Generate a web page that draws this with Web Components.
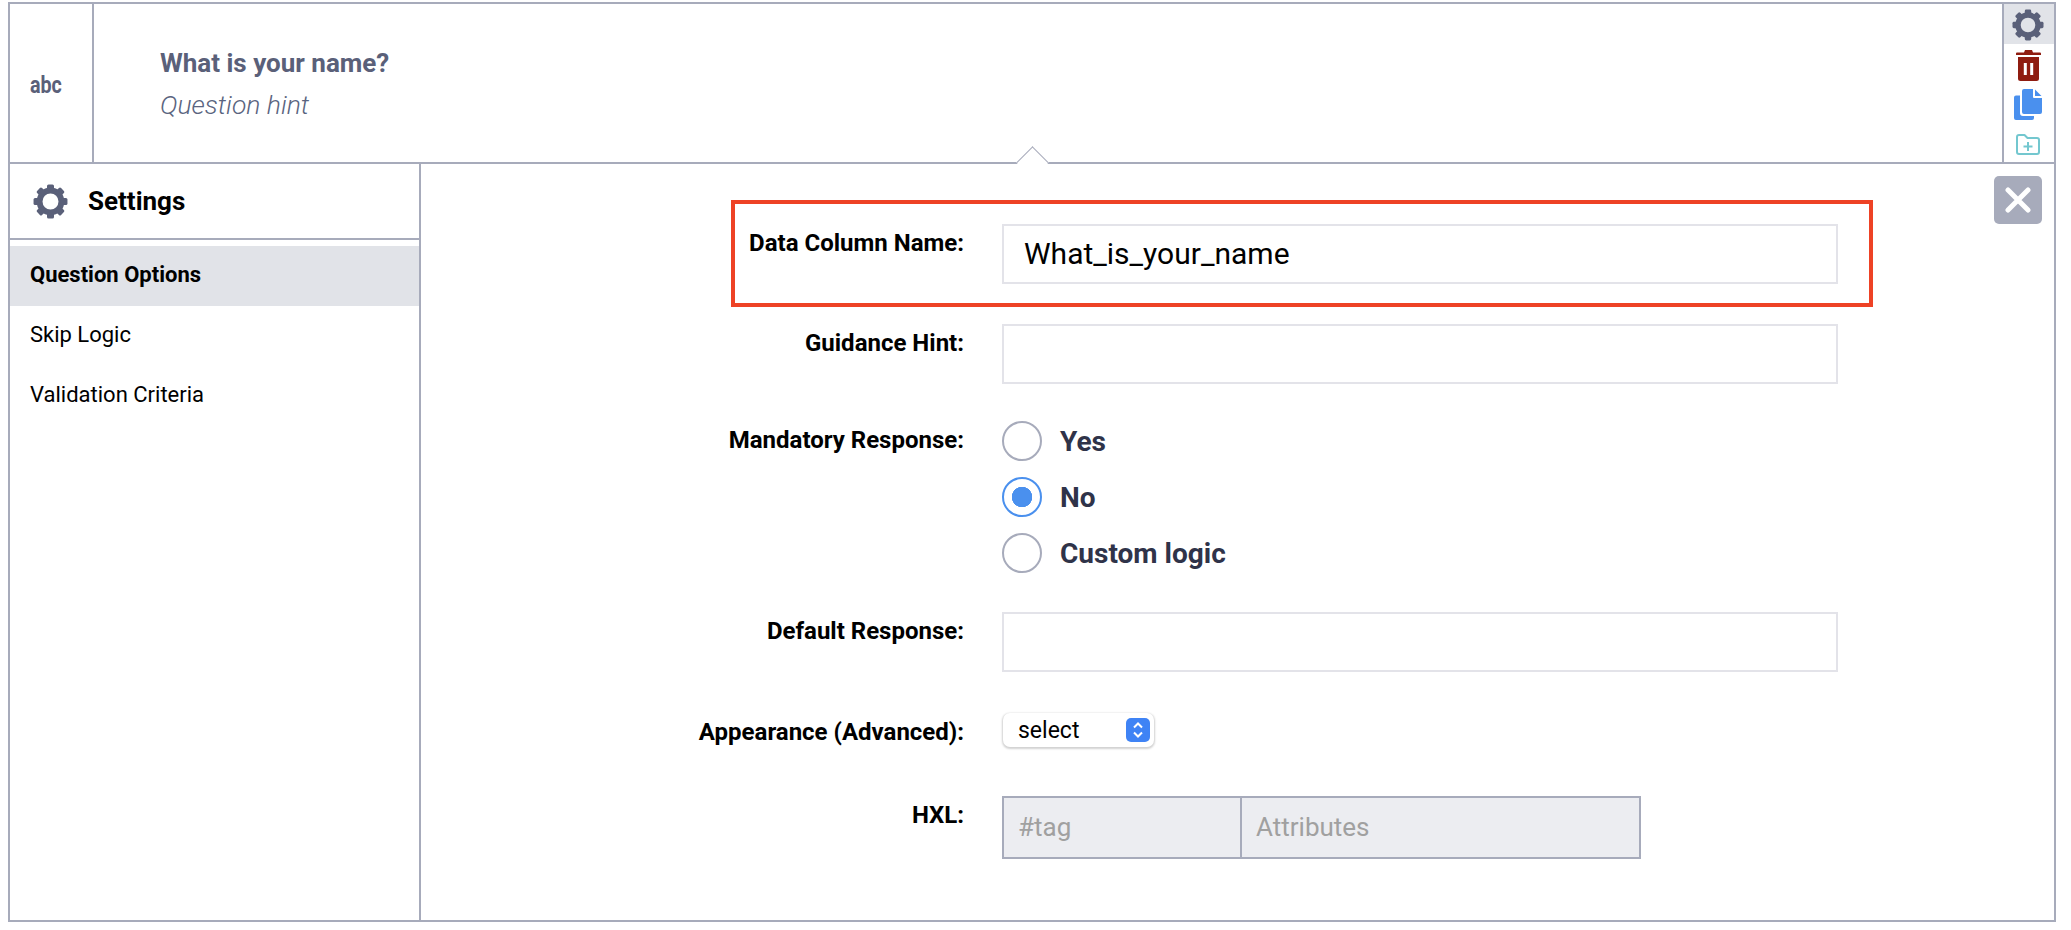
<!DOCTYPE html>
<html>
<head>
    <title>Question settings</title>
    <style>
        body { margin: 0; background: #fff; font-family: Roboto, "Liberation Sans", sans-serif; }
    </style>
</head>
<body>
<q-editor>
    <q-head slot="head" type="abc" title-text="What is your name?" hint="Question hint"></q-head>
    <q-side slot="side">
        <q-nav active>Question Options</q-nav>
        <q-nav>Skip Logic</q-nav>
        <q-nav>Validation Criteria</q-nav>
    </q-side>
    <q-form slot="form">
        <q-field label="Data Column Name:"><q-box>What_is_your_name</q-box></q-field>
        <q-field label="Guidance Hint:" style="margin-top:40px"><q-box></q-box></q-field>
        <q-field label="Mandatory Response:" style="margin-top:37px">
            <q-radio>Yes</q-radio>
            <q-radio checked>No</q-radio>
            <q-radio>Custom logic</q-radio>
        </q-field>
        <q-field label="Default Response:" style="margin-top:39px"><q-box></q-box></q-field>
        <q-field label="Appearance (Advanced):" style="margin-top:41px"><q-select>select</q-select></q-field>
        <q-field label="HXL:" style="margin-top:45px"><q-hxl></q-hxl></q-field>
    </q-form>
</q-editor>

<script>
    const GEAR = `<svg viewBox="0 0 32 32" width="100%" height="100%" style="display:block">
        <circle cx="16" cy="16" r="10" fill="none" stroke="#5a6079" stroke-width="5.4"/>
        <g fill="#5a6079">
            ${[0, 45, 90, 135, 180, 225, 270, 315].map(a => `<rect x="12.8" y="0.5" width="6.4" height="6" rx="1.4" transform="rotate(${a} 16 16)"/>`).join('')}
        </g></svg>`;

    function define(name, css, html) {
        customElements.define(name, class extends HTMLElement {
            constructor() {
                super();
                let root = this.attachShadow({mode: 'open'});
                root.innerHTML = `<style>${css}</style>` + (typeof html === 'function' ? html(this) : html);
            }
        });
    }

    define('q-editor', `
        :host { display: flex; flex-direction: column; box-sizing: border-box; width: 2048px; height: 920px;
                margin: 2px 0 0 8px; border: 2px solid #a7abbb; }
        .body { flex: 1; display: flex; min-height: 0; }
    `, `<slot name="head"></slot>
        <div class="body"><slot name="side"></slot><slot name="form"></slot></div>`);

    define('q-head', `
        :host { display: flex; position: relative; box-sizing: border-box; height: 160px; border-bottom: 2px solid #a7abbb; }
        .type { border-right: 2px solid #a7abbb; display: flex; align-items: center; padding: 3px 0 0 20px;
                box-sizing: content-box; width: 62px; font: bold 24px Roboto, sans-serif; color: #5a6079; }
        .type span { display: inline-block; transform: scaleX(.82); transform-origin: left center; }
        .text { flex: 1; padding: 42px 0 0 66px; }
        .title { font: bold 26px/34px Roboto, sans-serif; color: #5a6079; }
        .hint { font: italic 300 26.500px/34px Roboto, sans-serif; color: #5a6480; margin-top: 8px; }
        .notch { position: absolute; left: 1011px; bottom: -12px; width: 22px; height: 22px; background: #fff;
                 border: solid #a7abbb; border-width: 1px 0 0 1px; transform: rotate(45deg); }
        .tools { width: 50px; border-left: 2px solid #a7abbb; display: flex; flex-direction: column; align-items: center; }
        .tool { box-sizing: border-box; height: 40px; width: 100%; padding-right: 2px; display: flex; align-items: center; justify-content: center; flex: none; }
        .tool.on { background: #e1e3e8; padding-top: 2px; }
        .tool svg { display: block; }
    `, el => `
        <div class="type"><span>${el.getAttribute('type')}</span></div>
        <div class="text">
            <div class="title">${el.getAttribute('title-text')}</div>
            <div class="hint">${el.getAttribute('hint')}</div>
        </div>
        <div class="notch"></div>
        <div class="tools">
            <div class="tool on"><span style="width:32px;height:32px;display:block">${GEAR}</span></div>
            <div class="tool" style="height:41px;padding-top:1px">
                <svg width="25" height="31" viewBox="0 0 25 31">
                    <path fill="#8f1c10" d="M9 0h7l1 2.500h7a1 1 0 0 1 1 1V5H0V3.500a1 1 0 0 1 1-1h7zM2 7h21v21.500a2.500 2.500 0 0 1-2.500 2.500h-16A2.500 2.500 0 0 1 2 28.500z"/>
                    <rect x="7.800" y="13" width="3" height="12" fill="#fff"/><rect x="14.200" y="13" width="3" height="12" fill="#fff"/>
                </svg>
            </div>
            <div class="tool" style="height:39px">
                <svg width="28" height="31" viewBox="0 0 28 31">
                    <path fill="#4a90ee" d="M0 8.500a2 2 0 0 1 2-2h4V24a3 3 0 0 0 3 3h11v2a2 2 0 0 1-2 2H2a2 2 0 0 1-2-2z"/>
                    <path fill="#4a90ee" d="M10 0h9v8a1 1 0 0 0 1 1h8v14a2 2 0 0 1-2 2H10a2 2 0 0 1-2-2V2a2 2 0 0 1 2-2z"/>
                    <path fill="#4a90ee" d="M21 0.500l6.500 6.500H21z"/>
                </svg>
            </div>
            <div class="tool" style="height:38px;padding-top:3px">
                <svg width="24" height="21" viewBox="0 0 24 21" fill="none" stroke="#73c7cf">
                    <path stroke-width="2" stroke-linejoin="round" d="M1 3a2 2 0 0 1 2-2h5.500l3 3H21a2 2 0 0 1 2 2v12a2 2 0 0 1-2 2H3a2 2 0 0 1-2-2z"/>
                    <path stroke-width="2" d="M12 8v9M7.500 12.500h9"/>
                </svg>
            </div>
        </div>`);

    define('q-side', `
        :host { display: block; flex: none; box-sizing: border-box; width: 411px; border-right: 2px solid #a7abbb; }
        .top { display: flex; align-items: center; box-sizing: border-box; height: 76px; padding-left: 23px; gap: 20px;
               border-bottom: 2px solid #a7abbb; font: bold 26px Roboto, sans-serif; color: #000; }
        .gear { width: 35px; height: 35px; flex: none; }
        .items { padding-top: 6px; }
    `, `<div class="top"><span class="gear">${GEAR}</span><span>Settings</span></div>
        <div class="items"><slot></slot></div>`);

    define('q-nav', `
        :host { display: block; height: 60px; padding-left: 20px; font: 22px/58px Roboto, sans-serif; color: #000; }
        :host([active]) { background: #e1e3e8; font-weight: bold; }
    `, `<slot></slot>`);

    define('q-form', `
        :host { display: block; position: relative; flex: 1; padding-top: 60px; }
        .mark { position: absolute; left: 310px; top: 36px; width: 1142px; height: 107px; box-sizing: border-box; border: 4px solid #ee4225; }
        .close { position: absolute; right: 12px; top: 12px; width: 48px; height: 48px; background: #a7abbb; border-radius: 5px;
                 display: flex; align-items: center; justify-content: center; }
    `, `<slot></slot>
        <div class="mark"></div>
        <div class="close"><svg width="26" height="26" viewBox="0 0 26 26"><path d="M3 3l20 20M23 3L3 23" stroke="#fff" stroke-width="5" stroke-linecap="round"/></svg></div>`);

    define('q-field', `
        :host { display: flex; }
        label { width: 543px; flex: none; text-align: right; font: bold 24px/38px Roboto, sans-serif; color: #000; }
        .ctl { margin-left: 38px; width: 836px; }
    `, el => `<label>${el.getAttribute('label')}</label><div class="ctl"><slot></slot></div>`);

    define('q-box', `
        :host { display: block; box-sizing: border-box; height: 60px; border: 2px solid #e3e3e9; padding-left: 20px;
                font: 30px/56px Roboto, sans-serif; color: #000; }
    `, `<slot></slot>`);

    define('q-radio', `
        :host { display: flex; align-items: center; height: 40px; gap: 18px; margin-bottom: 16px;
                font: bold 28px Roboto, sans-serif; color: #2f3349; }
        :host(:last-child) { margin-bottom: 0; }
        .dot { width: 40px; height: 40px; box-sizing: border-box; border: 2px solid #a7abbb; border-radius: 50%; background: #fff; }
        :host([checked]) .dot { border-color: #4a90ee; background: radial-gradient(circle, #4a90ee 0 10px, #fff 10.500px); }
    `, `<span class="dot"></span><span><slot></slot></span>`);

    define('q-select', `
        :host { display: flex; align-items: center; box-sizing: border-box; width: 151px; height: 34px; margin-left: 1px; padding: 0 4px 0 15px;
                background: #fff; border-radius: 7px; box-shadow: 0 1px 2px 1px rgba(0, 0, 0, .18);
                font: 23px Roboto, sans-serif; color: #000; justify-content: space-between; }
        .arrows { width: 24px; height: 24px; border-radius: 5px; background: #3f83f5; display: block; }
    `, `<span><slot></slot></span>
        <svg class="arrows" viewBox="0 0 24 24" fill="none" stroke="#fff" stroke-width="2"><path d="M8 9.500l4-4 4 4M8 14.500l4 4 4-4"/></svg>`);

    define('q-hxl', `
        :host { display: flex; box-sizing: border-box; width: 639px; height: 63px; border: 2px solid #a7abbb; background: #ecedf1;
                font: 26px/59px Roboto, sans-serif; color: #a0a0a0; }
        .tag { box-sizing: content-box; padding-left: 14px; border-right: 2px solid #a7abbb; width: 222px; }
        .attr { padding-left: 14px; }
    `, `<div class="tag">#tag</div><div class="attr">Attributes</div>`);
</script>
</body>
</html>
